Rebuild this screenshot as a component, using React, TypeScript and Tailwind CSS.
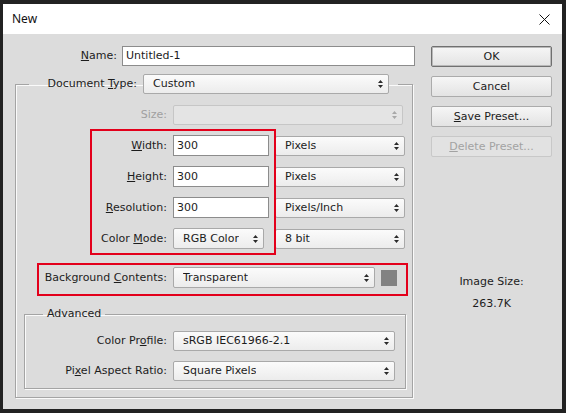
import React from "react";

type SelectProps = {
  value?: string;
  className: string;
  disabled?: boolean;
};

function Arrows({ disabled = false }: { disabled?: boolean }) {
  return (
    <svg width="7" height="10" viewBox="0 0 7 10" className="shrink-0">
      <path
        d="M1 4 L3.5 1 L6 4 Z M1 6 L3.5 9 L6 6 Z"
        fill={disabled ? "#a8a8a8" : "#2b2b2b"}
      />
    </svg>
  );
}

function Select({ value = "", className, disabled = false }: SelectProps) {
  return (
    <div
      className={`flex items-center justify-between rounded-[2px] border pl-[9px] pr-[4px] ${
        disabled
          ? "border-[#c6c6c6] bg-[#e4e4e4] text-[#9a9a9a]"
          : "border-[#a9a9a9] bg-gradient-to-b from-[#fbfbfb] to-[#ececec] text-[#1c1c1c]"
      } ${className}`}
    >
      <span className="truncate">{value}</span>
      <Arrows disabled={disabled} />
    </div>
  );
}

function Field({ value, className }: { value: string; className: string }) {
  return (
    <div
      className={`flex items-center border border-[#8c8c8c] bg-white pl-[3px] text-[#1c1c1c] ${className}`}
    >
      {value}
    </div>
  );
}

function Button({
  children,
  primary = false,
  disabled = false,
}: {
  children: React.ReactNode;
  primary?: boolean;
  disabled?: boolean;
}) {
  return (
    <div
      className={`flex h-[21px] w-[121px] items-center justify-center rounded-[2px] border ${
        primary
          ? "border-[#707070] bg-gradient-to-b from-[#f6f6f6] to-[#e3e3e3] text-[#1c1c1c] shadow-[inset_0_0_0_1px_#b8b8b8]"
          : disabled
            ? "border-[#c8c8c8] bg-[#e2e2e2] text-[#a2a2a2]"
            : "border-[#ababab] bg-gradient-to-b from-[#f6f6f6] to-[#e3e3e3] text-[#1c1c1c]"
      }`}
    >
      {children}
    </div>
  );
}

function Label({ children, className = "w-[143px]", disabled = false }: { children: React.ReactNode; className?: string; disabled?: boolean }) {
  return (
    <span className={`shrink-0 text-right ${disabled ? "text-[#a0a0a0]" : "text-[#1c1c1c]"} ${className}`}>
      {children}
    </span>
  );
}

export default function App() {
  return (
    <div className="flex h-[413px] w-[566px] flex-col bg-[#222222] pb-[4px] pl-[3px] pr-[4px] pt-[4px] font-['DejaVu_Sans',sans-serif] text-[11px] leading-[14px]">
      {/* Title bar */}
      <div className="flex h-[30px] shrink-0 items-center justify-between bg-white pl-[9px] pr-[12px] font-['Noto_Sans',sans-serif] text-[12px] text-[#111]">
        <span>New</span>
        <svg width="11" height="11" viewBox="0 0 11 11">
          <path d="M0.5 0.5 L10.5 10.5 M10.5 0.5 L0.5 10.5" stroke="#111" strokeWidth="1" />
        </svg>
      </div>

      {/* Body */}
      <div className="flex flex-1 bg-[#dcdcdc]">
        {/* Left form */}
        <div className="relative w-[428px] pt-[12px]">
          <div className="flex h-[20px] items-center">
            <Label className="w-[114px]">
              <u>N</u>ame:
            </Label>
            <Field value="Untitled-1" className="ml-[5px] h-[20px] w-[293px]" />
          </div>

          <fieldset className="ml-[12px] mt-[8px] w-[398px] border border-[#a4a4a4] pb-[8px] pl-[8px] pr-[6px] shadow-[inset_1px_1px_0_#fafafa,1px_1px_0_#fafafa]">
            <legend className="ml-[5px] w-[369px] pr-[9px]">
              <div className="flex h-[20px] items-center">
                <Label className="w-[108px]">
                  Document <u>T</u>ype:
                </Label>
                <Select value="Custom" className="ml-[6px] h-[20px] w-[246px]" />
              </div>
            </legend>

            <div className="mt-[11px] flex h-[20px] items-center">
              <Label disabled>Size:</Label>
              <Select disabled className="ml-[6px] h-[20px] w-[230px]" />
            </div>

            <div className="mt-[10px] flex h-[21px] items-center">
              <Label>
                <u>W</u>idth:
              </Label>
              <Field value="300" className="ml-[6px] h-[21px] w-[96px]" />
              <Select value="Pixels" className="ml-[6px] h-[20px] w-[130px]" />
            </div>

            <div className="mt-[10px] flex h-[21px] items-center">
              <Label>
                <u>H</u>eight:
              </Label>
              <Field value="300" className="ml-[6px] h-[21px] w-[96px]" />
              <Select value="Pixels" className="ml-[6px] h-[20px] w-[130px]" />
            </div>

            <div className="mt-[10px] flex h-[21px] items-center">
              <Label>
                <u>R</u>esolution:
              </Label>
              <Field value="300" className="ml-[6px] h-[21px] w-[96px]" />
              <Select value="Pixels/Inch" className="ml-[6px] h-[20px] w-[130px]" />
            </div>

            <div className="mt-[10px] flex h-[21px] items-center">
              <Label>
                Color <u>M</u>ode:
              </Label>
              <Select value="RGB Color" className="ml-[6px] h-[21px] w-[91px]" />
              <Select value="8 bit" className="ml-[11px] h-[20px] w-[130px]" />
            </div>

            <div className="mt-[18px] flex h-[21px] items-center">
              <Label>
                Background <u>C</u>ontents:
              </Label>
              <Select value="Transparent" className="ml-[6px] h-[21px] w-[202px]" />
              <div className="ml-[6px] h-[16px] w-[16px] bg-[#828282]" />
            </div>

            <fieldset className="mt-[19px] w-[382px] border border-[#a4a4a4] pb-[7px] shadow-[inset_1px_1px_0_#fafafa,1px_1px_0_#fafafa]">
              <legend className="ml-[18px] px-[4px] text-[#1c1c1c]">Advanced</legend>
              <div className="mt-[10px] flex h-[20px] items-center">
                <Label className="w-[142px]">
                  Color Pr<u>o</u>file:
                </Label>
                <Select value="sRGB IEC61966-2.1" className="ml-[6px] h-[20px] w-[222px]" />
              </div>
              <div className="mt-[10px] flex h-[20px] items-center">
                <Label className="w-[142px]">
                  Pi<u>x</u>el Aspect Ratio:
                </Label>
                <Select value="Square Pixels" className="ml-[6px] h-[20px] w-[222px]" />
              </div>
            </fieldset>
          </fieldset>

          {/* Red annotation boxes */}
          <div className="pointer-events-none absolute left-[87px] top-[95px] h-[126px] w-[186px] border-2 border-[#e3001b]" />
          <div className="pointer-events-none absolute left-[34px] top-[229px] h-[33px] w-[371px] border-2 border-[#e3001b]" />
        </div>

        {/* Right column */}
        <div className="flex w-[121px] flex-col items-center pt-[12px]">
          <div className="flex flex-col gap-[9px]">
            <Button primary>OK</Button>
            <Button>Cancel</Button>
            <Button>
              <span>
                <u>S</u>ave Preset...
              </span>
            </Button>
            <Button disabled>
              <span>
                <u>D</u>elete Preset...
              </span>
            </Button>
          </div>
          <div className="mt-[118px] text-[#1c1c1c]">Image Size:</div>
          <div className="mt-[8px] text-[#1c1c1c]">263.7K</div>
        </div>
      </div>
    </div>
  );
}
